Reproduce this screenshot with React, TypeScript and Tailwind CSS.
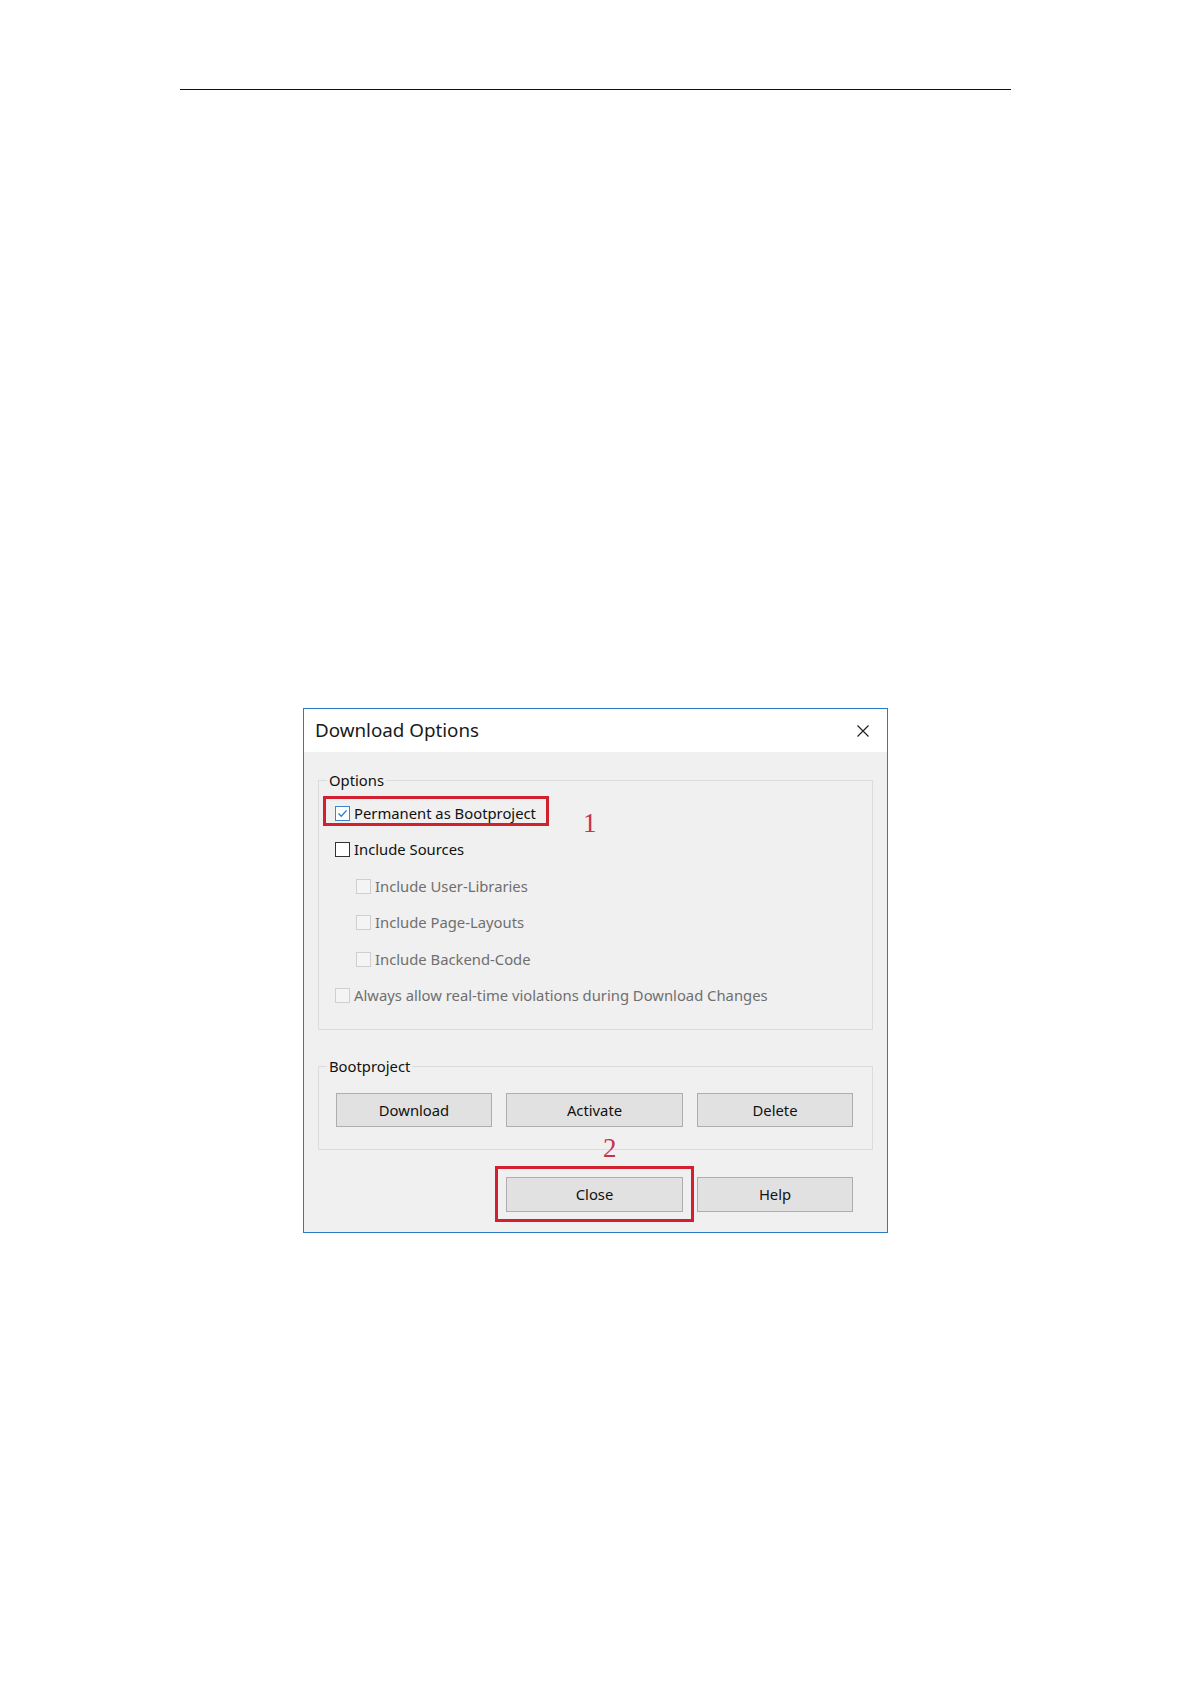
import React from 'react';

const FONT = "font-['Noto_Sans',sans-serif]";

const CheckBox: React.FC<{ checked?: boolean; disabled?: boolean }> = ({ checked, disabled }) => (
  <span
    className={
      'flex h-[15px] w-[15px] shrink-0 items-center justify-center border ' +
      (checked
        ? 'border-[#3b86d1] bg-white'
        : disabled
          ? 'border-[#cfcfcf] bg-[#f4f4f4]'
          : 'border-[#333333] bg-white')
    }
  >
    {checked && (
      <svg width="11" height="11" viewBox="0 0 11 11" fill="none">
        <path d="M1.5 5.5 L4.3 8.3 L9.6 2.4" stroke="#2f7fce" strokeWidth="1.4" />
      </svg>
    )}
  </span>
);

const OptionRow: React.FC<{ label: string; checked?: boolean; disabled?: boolean; indent?: boolean; children?: React.ReactNode }> = ({
  label,
  checked,
  disabled,
  indent,
  children,
}) => (
  <div className={'relative flex h-[36.5px] items-center gap-[4px] ' + (indent ? 'pl-[21px]' : '')}>
    <CheckBox checked={checked} disabled={disabled} />
    <span className={'text-[14.8px] leading-none ' + (disabled ? 'text-[#6f6f6f]' : 'text-[#111111]')}>{label}</span>
    {children}
  </div>
);

const Button: React.FC<{ label: string; width: string; height?: string }> = ({ label, width, height = 'h-[34px]' }) => (
  <button className={`${width} ${height} border border-[#adadad] bg-[#e1e1e1] text-[14.8px] text-[#111111]`}>{label}</button>
);

const App: React.FC = () => {
  return (
    <div className={`min-h-[1684px] w-[1191px] bg-white ${FONT}`}>
      {/* page header rule */}
      <div className="pl-[180px] pt-[89px]">
        <div className="h-px w-[831px] bg-[#111111]" />
      </div>

      {/* Download Options dialog */}
      <div className="ml-[303px] mt-[618px] w-[585px] border border-[#2b7bc4] bg-[#f0f0f0]">
        <div className="flex h-[43px] items-center justify-between bg-white pl-[11px] pr-[18px]">
          <span className="text-[18.8px] text-[#1a1a1a]">Download Options</span>
          <svg width="12" height="12" viewBox="0 0 12 12">
            <path d="M0.5 0.5 L11.5 11.5 M11.5 0.5 L0.5 11.5" stroke="#222222" strokeWidth="1.2" />
          </svg>
        </div>

        <div className="px-[14px] pt-[18px] pb-[20px]">
          <fieldset className="border border-[#dcdcdc] pl-[16px] pt-[5px] pb-[15px]">
            <legend className="-ml-[8px] px-[2px] text-[14.8px] leading-[20px] text-[#111111]">Options</legend>
            <OptionRow label="Permanent as Bootproject" checked>
              <span className="absolute left-[-12px] top-[1px] h-[30px] w-[226px] border-[3px] border-[#d3202f]" />
              <span className="absolute left-[248px] top-[13px] font-['Liberation_Serif',serif] text-[27px] leading-[30px] text-[#c7344a]">
                1
              </span>
            </OptionRow>
            <OptionRow label="Include Sources" />
            <OptionRow label="Include User-Libraries" disabled indent />
            <OptionRow label="Include Page-Layouts" disabled indent />
            <OptionRow label="Include Backend-Code" disabled indent />
            <OptionRow label="Always allow real-time violations during Download Changes" disabled />
          </fieldset>

          <fieldset className="mt-[26px] border border-[#dcdcdc] pl-[17px] pt-[17px] pb-[22px]">
            <legend className="-ml-[9px] px-[2px] text-[14.8px] leading-[20px] text-[#111111]">Bootproject</legend>
            <div className="flex gap-[14px]">
              <Button label="Download" width="w-[156px]" />
              <Button label="Activate" width="w-[177px]" />
              <Button label="Delete" width="w-[156px]" />
            </div>
          </fieldset>

          <div className="mt-[27px] flex justify-end gap-[14px] pr-[20px]">
            <div className="relative">
              <Button label="Close" width="w-[177px]" height="h-[35px]" />
              <span className="absolute -bottom-[10px] -left-[11px] -right-[11px] -top-[11px] border-[3px] border-[#d3202f]" />
              <span className="absolute left-[97px] top-[-44px] font-['Liberation_Serif',serif] text-[27px] leading-[30px] text-[#c7344a]">
                2
              </span>
            </div>
            <Button label="Help" width="w-[156px]" height="h-[35px]" />
          </div>
        </div>
      </div>
    </div>
  );
};

export default App;
